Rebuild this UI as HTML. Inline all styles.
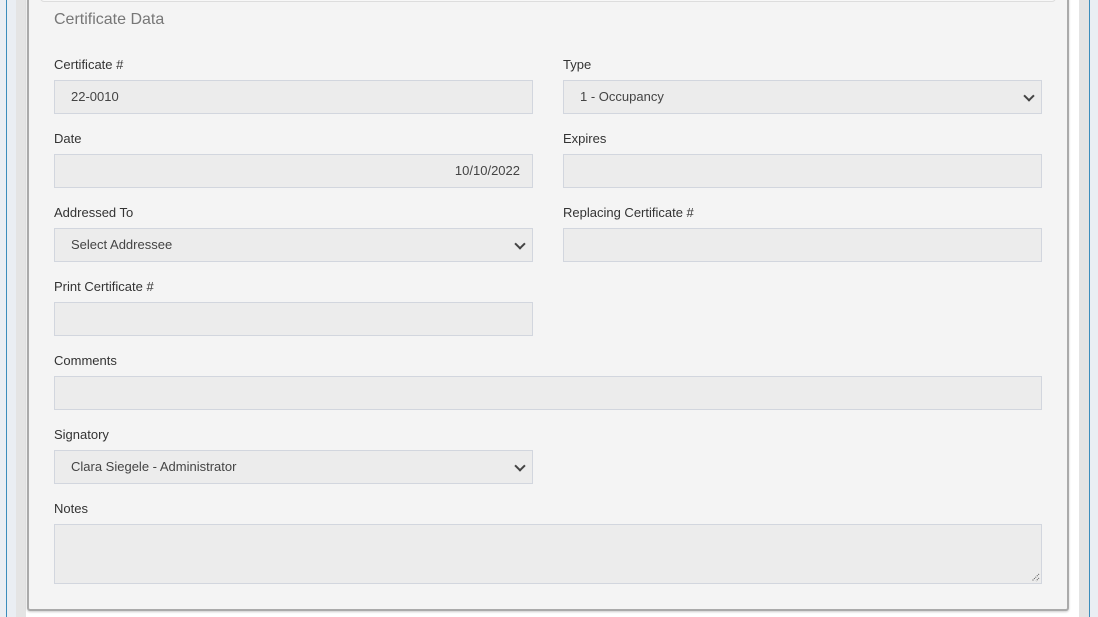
<!DOCTYPE html>
<html><head><meta charset="utf-8"><style>
*{box-sizing:border-box;margin:0;padding:0}
body{width:1098px;height:617px;background:#fff;position:relative;overflow:hidden;font-family:"Liberation Sans",sans-serif;font-size:13px;color:#333}
.abs{position:absolute}
.card{position:absolute;left:27px;top:-5px;width:1042px;height:616px;background:#f4f4f4;border:2px solid #aaa;border-radius:3px;box-shadow:0 1px 2px rgba(0,0,0,.2)}
.hdr{position:absolute;left:40px;top:-6px;width:1016px;height:8px;background:#f7f7f7;border:1px solid #ddd;border-radius:4px}
.title{position:absolute;left:54px;top:11px;font-size:16px;color:#777}
label{position:absolute;font-size:13px;color:#333}
.in{position:absolute;height:34px;background:#ececec;border:1px solid #d2d6de;font-size:13px;color:#444;line-height:32px;padding:0 16px}
.sel::after{content:"";position:absolute;right:8px;top:11px;width:6px;height:6px;border-right:2px solid #444;border-bottom:2px solid #444;transform:rotate(45deg)}
</style></head><body>
<div class="abs" style="left:0;top:0;width:6px;height:617px;background:#eaeef3"></div>
<div class="abs" style="left:6px;top:0;width:1px;height:617px;background:#3c8dbc"></div>
<div class="abs" style="left:7px;top:0;width:9px;height:617px;background:#eaeef3"></div>
<div class="abs" style="left:16px;top:0;width:10px;height:617px;background:#e4e4e4"></div>
<div class="abs" style="left:1079px;top:0;width:10px;height:617px;background:#e4e4e4"></div>
<div class="abs" style="left:1089px;top:0;width:1px;height:617px;background:#3c8dbc"></div>
<div class="abs" style="left:1090px;top:0;width:8px;height:617px;background:#eaeef3"></div>
<div class="card"></div>
<div class="hdr"></div>
<div class="title">Certificate Data</div>

<label style="left:54px;top:57px">Certificate #</label>
<div class="in" style="left:54px;top:80px;width:479px">22-0010</div>
<label style="left:563px;top:57px">Type</label>
<div class="in sel" style="left:563px;top:80px;width:479px">1 - Occupancy</div>

<label style="left:54px;top:131px">Date</label>
<div class="in" style="left:54px;top:154px;width:479px;text-align:right;padding-right:12px">10/10/2022</div>
<label style="left:563px;top:131px">Expires</label>
<div class="in" style="left:563px;top:154px;width:479px"></div>

<label style="left:54px;top:205px">Addressed To</label>
<div class="in sel" style="left:54px;top:228px;width:479px">Select Addressee</div>
<label style="left:563px;top:205px">Replacing Certificate #</label>
<div class="in" style="left:563px;top:228px;width:479px"></div>

<label style="left:54px;top:279px">Print Certificate #</label>
<div class="in" style="left:54px;top:302px;width:479px"></div>

<label style="left:54px;top:353px">Comments</label>
<div class="in" style="left:54px;top:376px;width:988px"></div>

<label style="left:54px;top:427px">Signatory</label>
<div class="in sel" style="left:54px;top:450px;width:479px">Clara Siegele - Administrator</div>

<label style="left:54px;top:501px">Notes</label>
<div class="in" style="left:54px;top:524px;width:988px;height:60px">
<svg style="position:absolute;right:1px;bottom:1px" width="9" height="9"><path d="M8 1L1 8M8 5L5 8" stroke="#555" stroke-width="1" stroke-dasharray="1 1"/></svg>
</div>
</body></html>
